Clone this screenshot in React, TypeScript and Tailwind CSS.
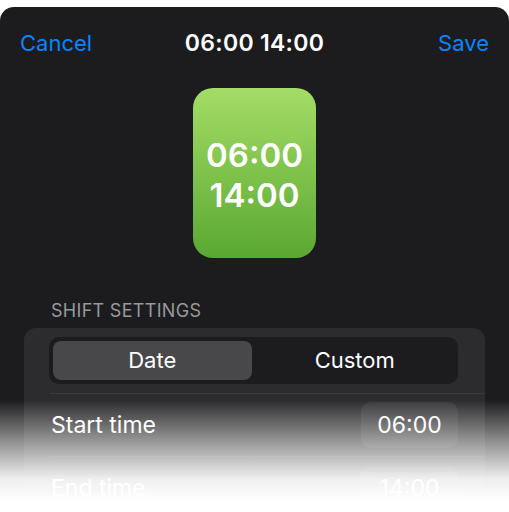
export default function App() {
  return (
    <div className="relative h-[512px] w-[509px] overflow-hidden bg-white font-['Inter',sans-serif]">
      <div className="mt-[7px] h-[505px] rounded-t-[14px] bg-[#1c1c1e]">
        {/* Nav bar */}
        <div className="grid grid-cols-[1fr_auto_1fr] items-center px-5 pt-[22px]">
          <span className="text-[22px] leading-7 text-[#0a84ff]">Cancel</span>
          <span className="text-[23px] font-semibold leading-7 tracking-[0.3px] text-white">06:00 14:00</span>
          <span className="text-right text-[22px] leading-7 text-[#0a84ff]">Save</span>
        </div>

        {/* Shift preview */}
        <div className="mt-[31px] flex justify-center">
          <div className="flex h-[170px] w-[123px] flex-col items-center justify-center rounded-[20px] bg-gradient-to-b from-[#a4dd66] to-[#59a831] pt-1">
            <span className="text-[33px] font-semibold leading-[40px] text-white">06:00</span>
            <span className="text-[33px] font-semibold leading-[40px] text-white">14:00</span>
          </div>
        </div>

        {/* Settings */}
        <div className="mt-[43px] pl-[51px] text-[18px] leading-5 tracking-[0.3px] text-[#98989d]">SHIFT SETTINGS</div>
        <div className="mx-6 mt-[7px] rounded-[12px] bg-[#2c2c2e] pt-[9px]">
          <div className="ml-[25px] mr-[27px] flex h-[47px] gap-1 rounded-[10px] bg-[#1c1c1e] p-[4px]">
            <div className="flex flex-1 items-center justify-center rounded-[8px] bg-[#48484a] text-[22px] text-white">
              Date
            </div>
            <div className="flex flex-1 items-center justify-center text-[22px] text-white">Custom</div>
          </div>
          <div className="ml-[26px] mt-[9px] h-px bg-[#3a3a3c]" />
          <div className="flex h-[62px] items-center justify-between pl-[27px] pr-[27px]">
            <span className="text-[23px] text-white">Start time</span>
            <span className="flex h-[46px] w-[97px] items-center justify-center rounded-[10px] bg-[#3a3a3c] text-[23px] text-white">
              06:00
            </span>
          </div>
          <div className="ml-[26px] h-px bg-[#3a3a3c]" />
          <div className="flex h-[62px] items-center justify-between pl-[27px] pr-[27px]">
            <span className="text-[23px] text-white">End time</span>
            <span className="flex h-[46px] w-[97px] items-center justify-center rounded-[10px] bg-[#3a3a3c] text-[23px] text-white">
              14:00
            </span>
          </div>
        </div>
      </div>

      {/* Bottom fade */}
      <div className="pointer-events-none absolute inset-x-0 bottom-0 h-[112px] bg-[linear-gradient(to_bottom,rgba(255,255,255,0)_0%,rgba(255,255,255,0.55)_40%,rgba(255,255,255,0.92)_70%,#ffffff_90%)]" />
    </div>
  );
}
